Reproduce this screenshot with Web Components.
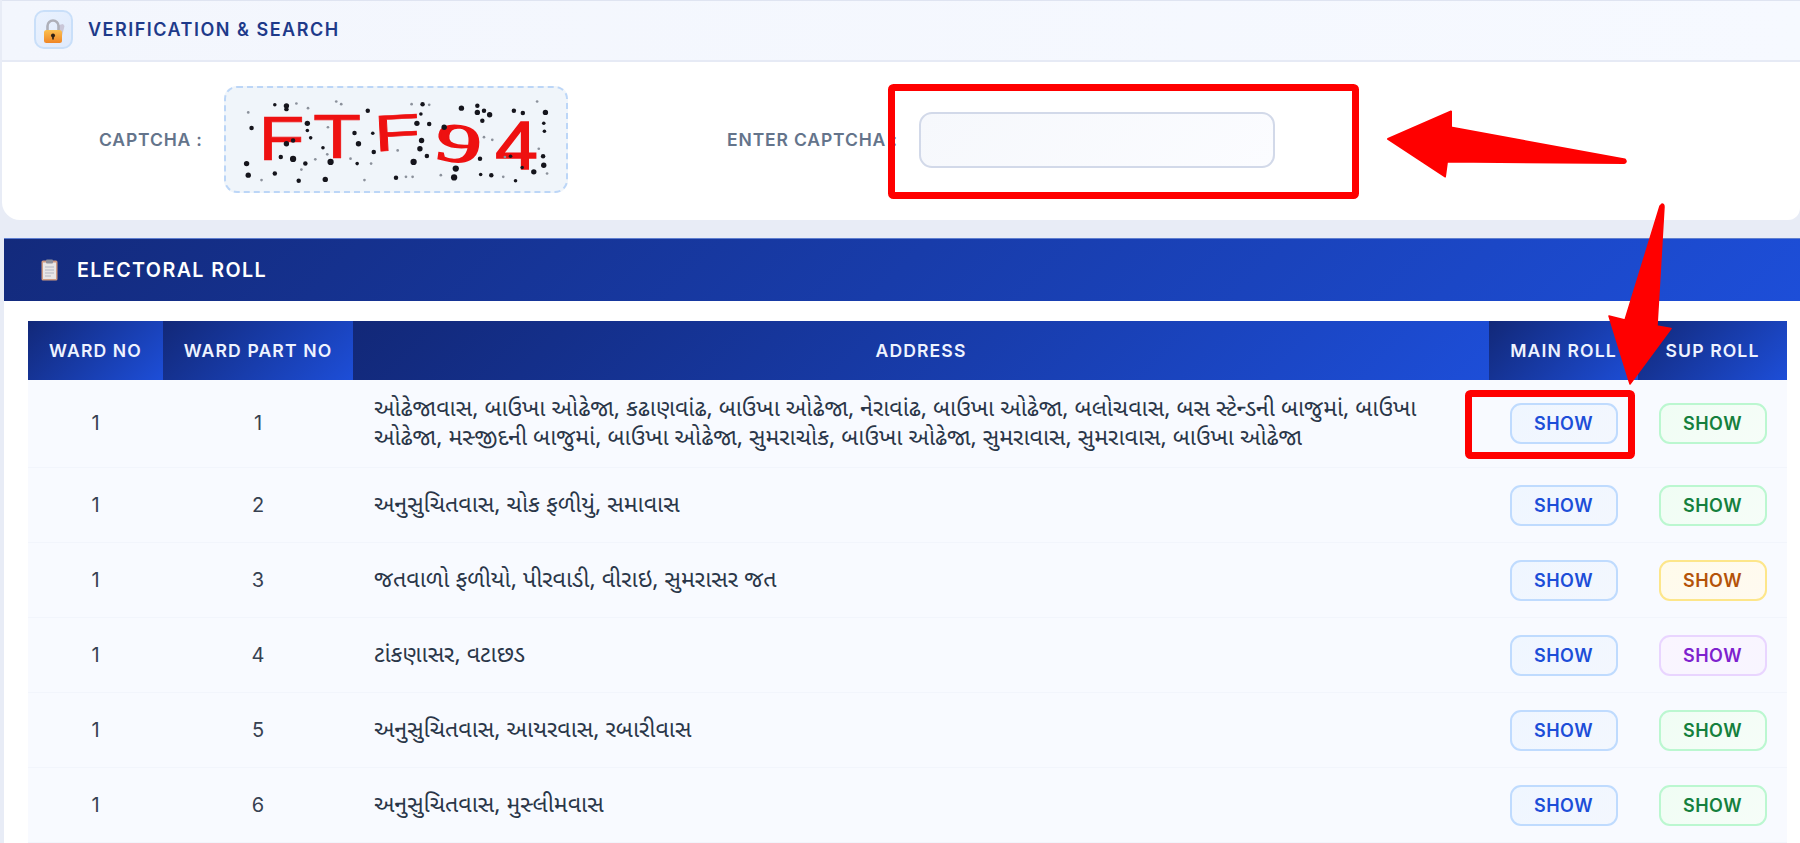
<!DOCTYPE html>
<html lang="gu">
<head>
<meta charset="utf-8">
<title>Electoral Roll</title>
<style>
  html, body { margin: 0; height: 843px; overflow: hidden; }
  body { background: #e8ecf6; font-family: Inter, "Noto Sans", "Noto Sans Gujarati", sans-serif; position: relative; }
</style>
</head>
<body>
<verify-panel>
  <captcha-image slot="captcha"></captcha-image>
</verify-panel>

<roll-section>
  <roll-row ward="1" part="1" sup="green">ઓઢેજાવાસ, બાઉખા ઓઢેજા, કઢાણવાંઢ, બાઉખા ઓઢેજા, નેરાવાંઢ, બાઉખા ઓઢેજા, બલોચવાસ, બસ સ્ટેન્ડની બાજુમાં, બાઉખા ઓઢેજા, મસ્જીદની બાજુમાં, બાઉખા ઓઢેજા, સુમરાચોક, બાઉખા ઓઢેજા, સુમરાવાસ, સુમરાવાસ, બાઉખા ઓઢેજા</roll-row>
  <roll-row ward="1" part="2" sup="green">અનુસુચિતવાસ, ચોક ફળીયું, સમાવાસ</roll-row>
  <roll-row ward="1" part="3" sup="amber">જતવાળો ફળીયો, પીરવાડી, વીરાઇ, સુમરાસર જત</roll-row>
  <roll-row ward="1" part="4" sup="purple">ટાંકણાસર, વટાછડ</roll-row>
  <roll-row ward="1" part="5" sup="green">અનુસુચિતવાસ, આયરવાસ, રબારીવાસ</roll-row>
  <roll-row ward="1" part="6" sup="green">અનુસુચિતવાસ, મુસ્લીમવાસ</roll-row>
</roll-section>

<red-annotations></red-annotations>

<script>
//small pill button used in both roll columns
class ShowBtn extends HTMLElement {
  constructor(){
    super();
    this.attachShadow({mode:"open"});
    this.shadowRoot.innerHTML = `
    <style>
      :host { display:flex; align-items:center; justify-content:center; box-sizing:border-box;
        width:108px; height:41px; border-radius:11px; border:2px solid #bfdbfe;
        background:linear-gradient(135deg,#eff6ff,#f3f7fe); color:#1d4ed8;
        font:600 18px Inter,"Noto Sans",sans-serif; letter-spacing:.5px; }
      :host([tone=green]) { border-color:#bbf7d0; background:linear-gradient(135deg,#f0fdf4,#f6fdf8); color:#15803d; }
      :host([tone=amber]) { border-color:#fde68a; background:linear-gradient(135deg,#fffbeb,#fffaf0); color:#b45309; }
      :host([tone=purple]) { border-color:#e9d5ff; background:linear-gradient(135deg,#faf5ff,#f8f5ff); color:#7e22ce; }
    </style>SHOW`;
  }
}
customElements.define("show-btn", ShowBtn);

//one data row of the roll, the address comes in through the slot
class RollRow extends HTMLElement {
  constructor(){
    super();
    this.attachShadow({mode:"open"});
  }
  connectedCallback(){
    this.shadowRoot.innerHTML = `
    <style>
      :host { display:grid; grid-template-columns:135px 190px 1136px 149px 149px; align-items:center;
        background:#f8faff; border-bottom:1px solid #f2f5fc; box-sizing:border-box; min-height:75px;
        color:#374151; font:400 20px/29px Inter,"Noto Sans",sans-serif; }
      .num { text-align:center; }
      .addr { padding:15.5px 21px 13.5px; font-size:23.2px; color:#2a3648; font-family:"Noto Sans Gujarati","Noto Sans",Inter,sans-serif; }
      .act { display:flex; justify-content:center; }
    </style>
    <div class="num">${this.getAttribute("ward")}</div>
    <div class="num">${this.getAttribute("part")}</div>
    <div class="addr"><slot></slot></div>
    <div class="act"><show-btn></show-btn></div>
    <div class="act"><show-btn tone="${this.getAttribute("sup")}"></show-btn></div>`;
  }
}
customElements.define("roll-row", RollRow);

//noisy captcha picture, letters stay real text
class CaptchaImage extends HTMLElement {
  constructor(){
    super();
    this.attachShadow({mode:"open"});
    const dots = [[195,75,6],[195,85,5],[160,72,4],[225,68,3],[260,82,3],[345,62,3],[360,70,3],[440,90,5],[605,70,5],[572,70,3],[625,72,3],[722,82,6],[770,75,5],[770,95,6],[790,90,5],[807,102,6],[785,120,5],[880,90,5],[907,97,5],[975,95,6],[950,62,3],[80,95,3],[90,142,5],[258,128,6],[258,150,4],[268,172,4],[400,157,5],[455,158,4],[320,140,3],[588,128,6],[625,130,5],[600,100,4],[670,140,6],[602,180,6],[597,205,6],[618,227,5],[412,190,6],[458,215,5],[305,202,4],[318,222,3],[195,190,6],[215,180,5],[178,230,5],[215,236,7],[252,250,5],[75,250,6],[80,285,6],[160,280,5],[120,300,3],[232,302,5],[240,268,3],[312,298,6],[328,245,7],[450,250,3],[408,250,4],[388,235,3],[282,237,3],[578,245,7],[525,293,5],[555,290,3],[575,290,3],[705,265,7],[700,292,7],[778,235,5],[780,283,4],[812,285,5],[885,302,4],[870,228,4],[853,230,3],[905,262,4],[940,275,6],[970,255,6],[968,228,5],[980,280,3],[848,290,3],[972,152,4],[970,128,4],[815,178,3],[790,170,3],[955,205,3],[530,210,3],[430,300,3],[660,285,3]];
    const circles = dots.map(d => `<circle cx="${d[0]}" cy="${d[1]}" r="${d[2]*1.35}" fill="${d[2]>3?'#15151c':'#8b919b'}"/>`).join("");
    this.shadowRoot.innerHTML = `
    <style>
      :host { display:block; box-sizing:border-box; width:344px; height:107px; border-radius:13px;
        border:2px dashed #bcd6f7; background:#f0f5fa; overflow:hidden; }
      svg { display:block; width:100%; height:100%; filter:blur(.6px); }
      text { font-family:"Liberation Sans",sans-serif; fill:#ee1111; stroke:#ee1111; stroke-width:2; }
    </style>
    <svg viewBox="13 21 1024 312" preserveAspectRatio="none">
      <text x="110" y="240" font-size="190" textLength="140" lengthAdjust="spacingAndGlyphs">F</text>
      <text x="275" y="232" font-size="190" textLength="145" lengthAdjust="spacingAndGlyphs">T</text>
      <text x="458" y="210" font-size="155" textLength="140" lengthAdjust="spacingAndGlyphs" transform="rotate(-3 530 150)">F</text>
      <text x="645" y="245" font-size="165" textLength="138" lengthAdjust="spacingAndGlyphs" transform="rotate(8 715 190)" style="font-family:'Liberation Serif',serif;stroke-width:5">9</text>
      <text x="824" y="265" font-size="210" textLength="128" lengthAdjust="spacingAndGlyphs" style="stroke-width:5">4</text>
      ${circles}
    </svg>`;
  }
}
customElements.define("captcha-image", CaptchaImage);

//top card with the captcha and its input
class VerifyPanel extends HTMLElement {
  constructor(){
    super();
    this.attachShadow({mode:"open"});
    this.shadowRoot.innerHTML = `
    <style>
      :host { display:block; box-sizing:border-box; height:220px; margin-left:2px; background:#fff;
        border-radius:0 0 12px 18px; overflow:hidden; }
      .head { display:flex; align-items:center; gap:15px; box-sizing:border-box; height:62px; padding:0 0 2px 32px;
        border-top:1px solid #dfe4f1; border-bottom:2px solid #e6eaf5;
        background:linear-gradient(90deg,#f3f6fd,#f6f9ff); }
      .ico { box-sizing:border-box; width:39px; height:39px; border-radius:10px; border:2px solid #c9dff9;
        background:linear-gradient(135deg,#eaf2fe,#dfeafc); display:flex; align-items:center; justify-content:center; }
      h2 { margin:0; font:600 18px Inter,sans-serif; letter-spacing:1.5px; color:#1e3a8a; }
      .body { display:flex; align-items:center; padding:24px 0 0 97px; }
      label { font:600 17.5px Inter,sans-serif; letter-spacing:.85px; color:#64748b; white-space:nowrap; margin-right:21.25px; }
      .second { margin-left:159px; }
      .input { box-sizing:border-box; width:356px; height:56px; border:2px solid #d2d9e9; border-radius:13px;
        background:linear-gradient(135deg,#f6f8fc,#fbfcff); }
    </style>
    <div class="head">
      <div class="ico">
        <svg width="26" height="30" viewBox="0 0 26 30">
          <defs>
            <linearGradient id="lk" x1="0" y1="0" x2="0" y2="1">
              <stop offset="0" stop-color="#fbc04f"/><stop offset="1" stop-color="#ef8526"/>
            </linearGradient>
          </defs>
          <path d="M18 10l4-1 1.5 2-2.5 10h-3z" fill="#c9c6d8"/>
          <path d="M6.5 16V11a5.5 5.5 0 0 1 11 0V16" fill="none" stroke="#aeb0b9" stroke-width="2.6"/>
          <rect x="3" y="15" width="18" height="13" rx="2.5" fill="url(#lk)"/>
          <circle cx="12" cy="20.5" r="2" fill="#2f2114"/>
          <rect x="11.2" y="20.5" width="1.6" height="4" fill="#2f2114"/>
        </svg>
      </div>
      <h2>VERIFICATION &amp; SEARCH</h2>
    </div>
    <div class="body">
      <label>CAPTCHA :</label>
      <slot name="captcha"></slot>
      <label class="second">ENTER CAPTCHA :</label>
      <div class="input"></div>
    </div>`;
  }
}
customElements.define("verify-panel", VerifyPanel);

//blue section bar, table head, rows in the slot
class RollSection extends HTMLElement {
  constructor(){
    super();
    this.attachShadow({mode:"open"});
    this.shadowRoot.innerHTML = `
    <style>
      :host { display:block; margin:18px 0 0 4px; background:#fff; height:605px; overflow:hidden; }
      .bar { display:flex; align-items:center; gap:19px; box-sizing:border-box; height:63px; padding-left:37px;
        background:linear-gradient(135deg,#132a7c,#1d4ed8); border-top:1px solid #5f7fd0; color:#fff;
        font:600 19.7px Inter,sans-serif; letter-spacing:1.4px; }
      .wrap { padding:20px 13px 0 24px; }
      .head { display:grid; grid-template-columns:135px 190px 1136px 149px 149px; height:59px; }
      .head div { display:flex; align-items:center; justify-content:center; padding-bottom:1px; color:#eef3ff;
        background:linear-gradient(135deg,#122878,#1d4ed8); font:600 17.6px Inter,sans-serif; letter-spacing:1.1px; }
    </style>
    <div class="bar">
      <svg width="17" height="22" viewBox="0 0 17 22">
        <rect x=".5" y="1.5" width="16" height="20" rx="1.5" fill="#cf9b82"/>
        <rect x="2" y="3.5" width="13" height="16.5" fill="#e8e6e6"/>
        <rect x="5" y=".5" width="7" height="4" rx="1" fill="#8d8f9b"/>
        <path d="M4 8h9M4 11h9M4 14h9M4 17h6" stroke="#b4b6c2" stroke-width="1"/>
      </svg>
      ELECTORAL ROLL
    </div>
    <div class="wrap">
      <div class="head">
        <div>WARD NO</div><div>WARD PART NO</div><div>ADDRESS</div><div>MAIN ROLL</div><div>SUP ROLL</div>
      </div>
      <slot></slot>
    </div>`;
  }
}
customElements.define("roll-section", RollSection);

//red marks somebody drew over the screenshot, they lie on top of everything
class RedAnnotations extends HTMLElement {
  constructor(){
    super();
    this.attachShadow({mode:"open"});
    this.shadowRoot.innerHTML = `
    <style>
      :host { position:absolute; left:0; top:0; width:1800px; height:843px; pointer-events:none; }
      svg { display:block; }
    </style>
    <svg width="1800" height="843" viewBox="0 0 1800 843">
      <rect x="891.5" y="87.5" width="464" height="108" rx="2" fill="none" stroke="#ff0000" stroke-width="7"/>
      <rect x="1468.5" y="393.5" width="163" height="62" rx="2" fill="none" stroke="#ff0000" stroke-width="7"/>
      <path d="M1388 139 L1451 111.5 L1451 127.5 L1625 159.5 Q1627 162 1624 163 L1447 161.5 L1445 176.5 Z" fill="#ff0000" stroke="#ff0000" stroke-width="2" stroke-linejoin="round"/>
      <path d="M1662 204 Q1664 204 1664 207 L1657 326 L1671 328.5 L1630 384 L1609 316 L1625 320 L1660 206 Z" fill="#ff0000" stroke="#ff0000" stroke-width="1.5" stroke-linejoin="round"/>
    </svg>`;
  }
}
customElements.define("red-annotations", RedAnnotations);
</script>
</body>
</html>
